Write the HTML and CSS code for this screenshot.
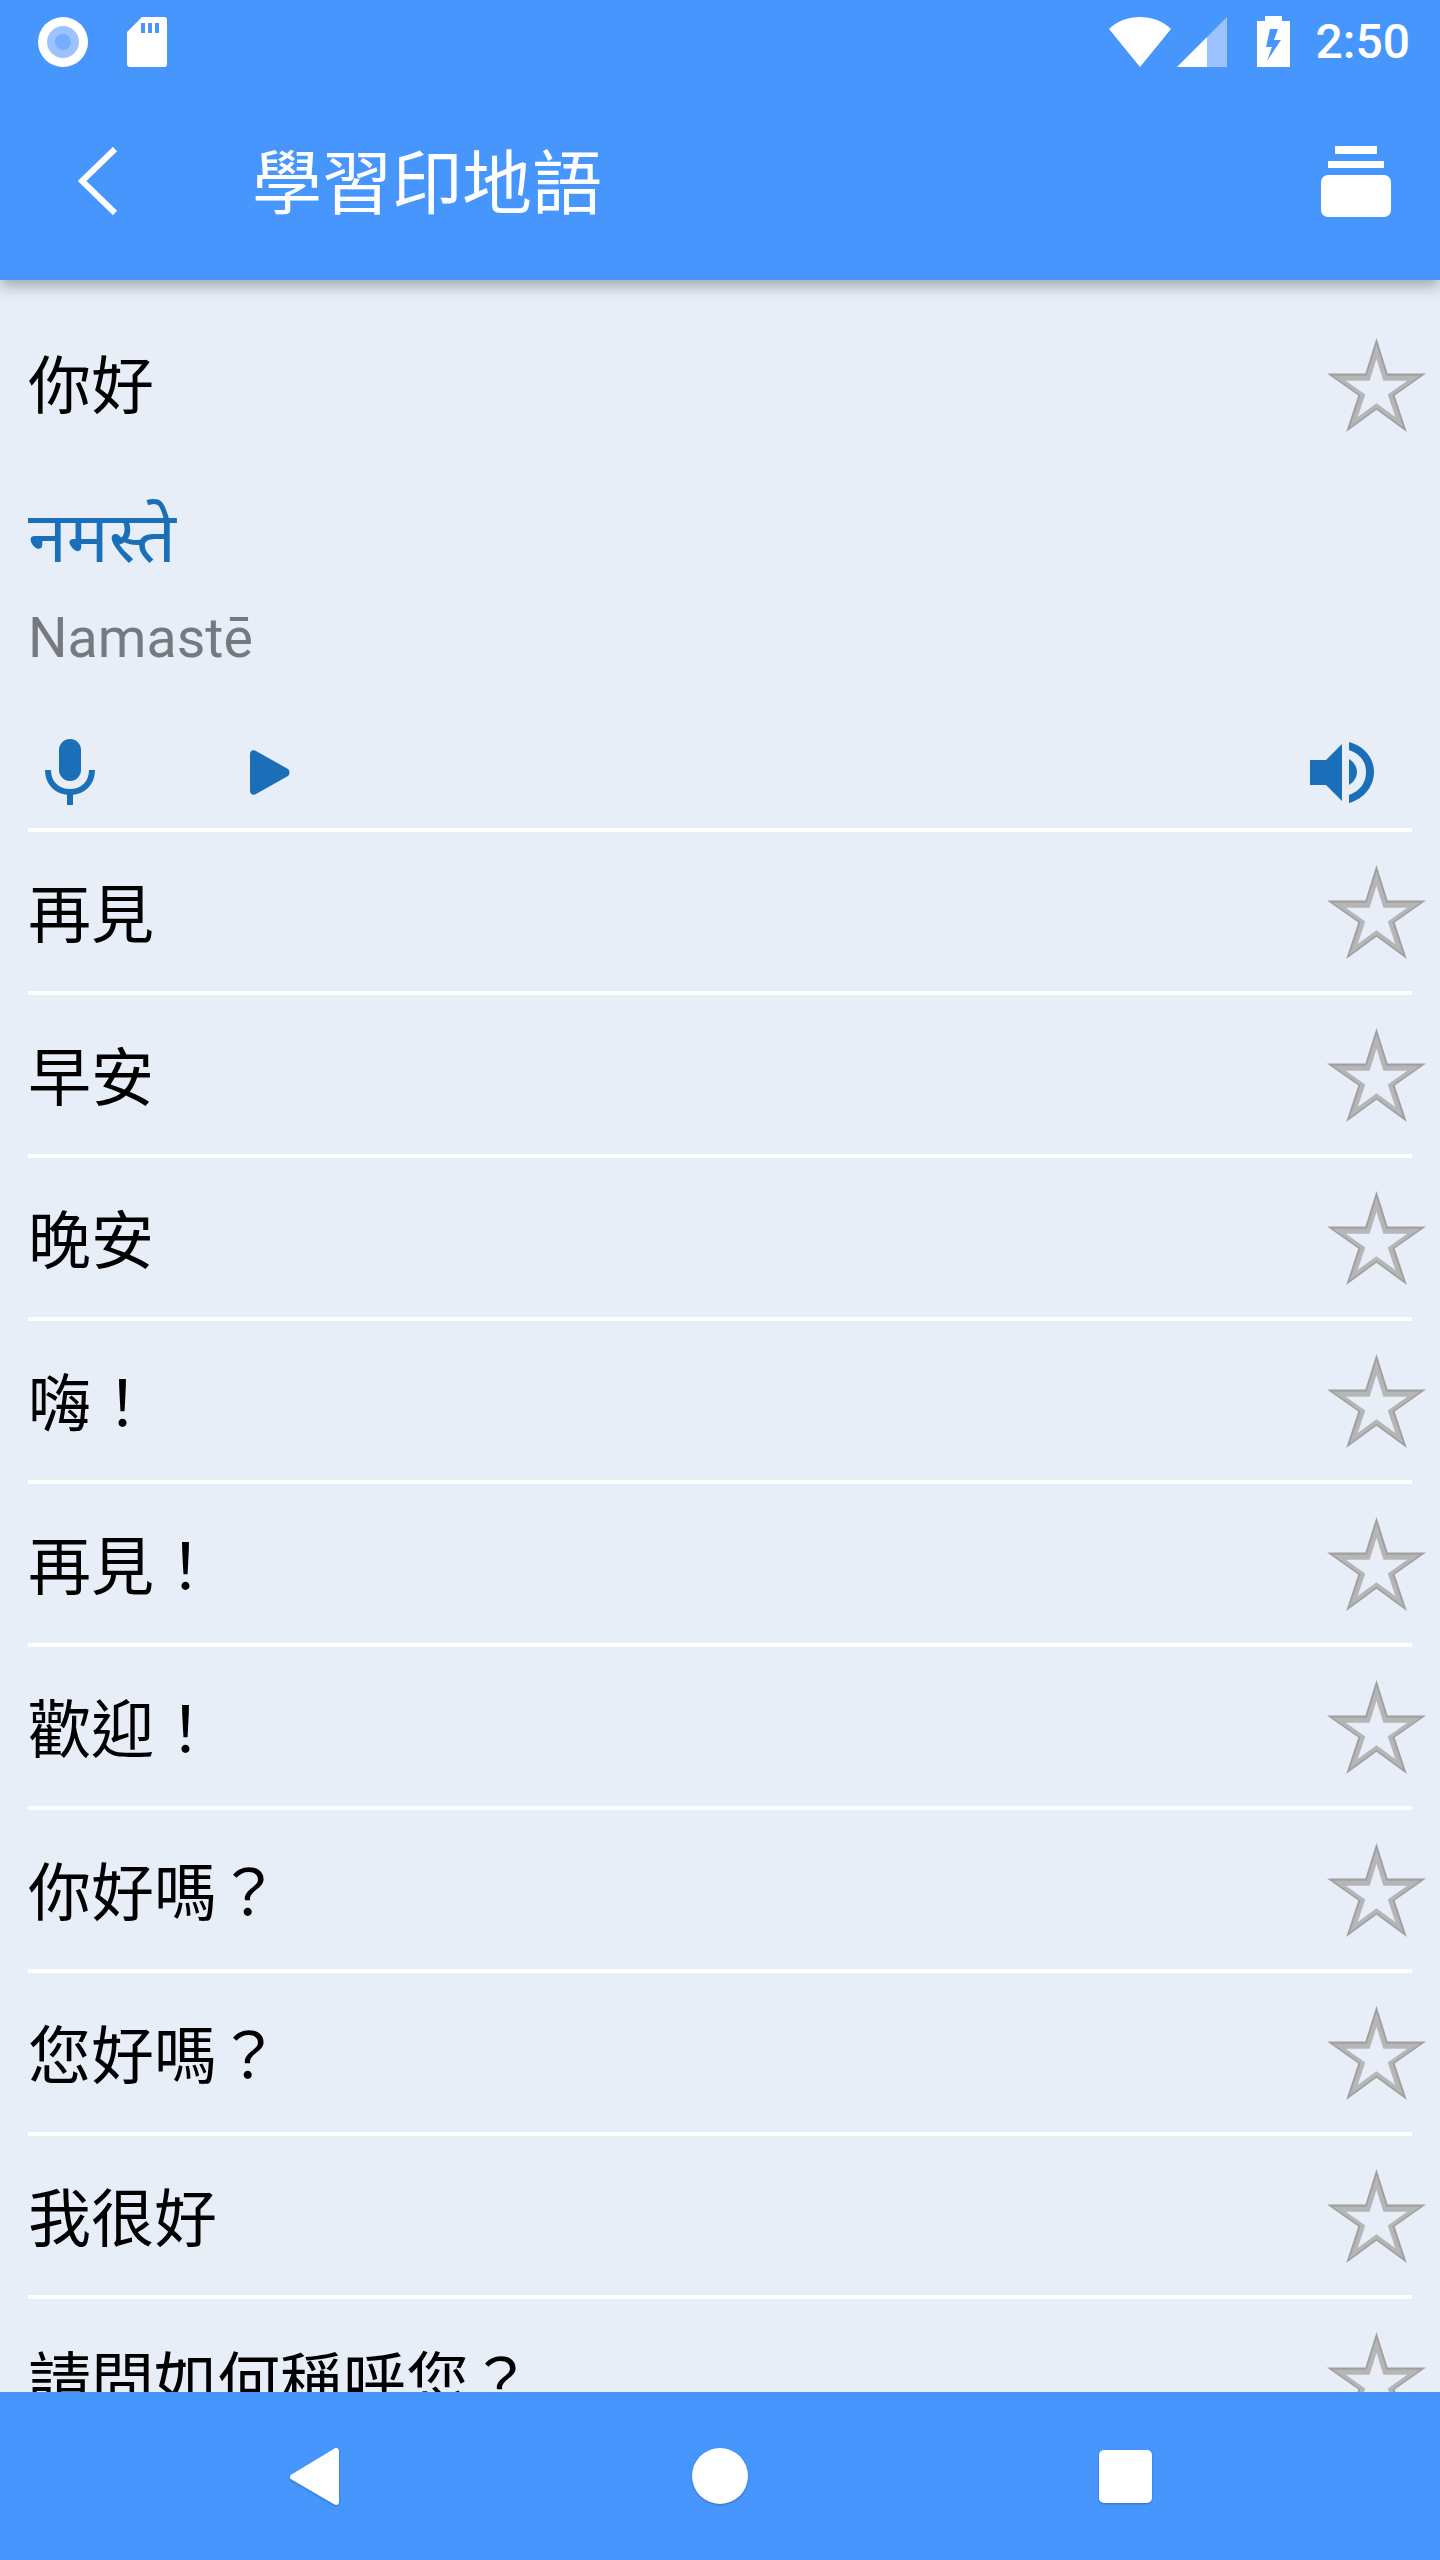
FILE: index.html
```html
<!DOCTYPE html>
<html lang="zh-Hant">
<head>
  <meta charset="UTF-8"/>
  <meta name="viewport" content="width=device-width, initial-scale=1.0"/>
  <title>學習印地語</title>
  <link rel="stylesheet" href="styles.css">
</head>
<body>
  <svg class="defs" width="0" height="0">
    <defs>
      <polygon id="star-shape" points="49,0 60,35 98,35 67,57 79,93 49,71 19,93 31,57 0,35 38,35"/>
      <g id="star">
        <use href="#star-shape" class="star-outer"/>
        <use href="#star-shape" class="star-mid" transform="translate(49 54) scale(.88) translate(-49 -54)"/>
        <use href="#star-shape" class="star-hole" transform="translate(49 54) scale(.62) translate(-49 -54)"/>
      </g>
    </defs>
  </svg>

  <header class="appbar">
    <div class="statusbar">
      <div class="status-left">
        <svg class="ic-rec" viewBox="0 0 50 50"><circle cx="25" cy="25" r="25" fill="#fff"/><circle cx="25" cy="25" r="16" fill="#9cc3ff"/><circle cx="25" cy="25" r="8" fill="#74aefe"/></svg>
        <svg class="ic-sd" viewBox="0 0 40 50"><path fill="#fff" fill-rule="evenodd" d="M15 0H37a3 3 0 0 1 3 3V47a3 3 0 0 1-3 3H3a3 3 0 0 1-3-3V15ZM14 6v10h4V6ZM21 6v10h4V6ZM28 6v10h4V6Z"/></svg>
      </div>
      <div class="status-right">
        <svg class="ic-wifi" viewBox="0 0 62 50"><path fill="#fff" d="M31 50 0 12C8 4 19 0 31 0s23 4 31 12Z"/></svg>
        <svg class="ic-signal" viewBox="0 0 50 50"><path fill="#9cc3ff" d="M50 0V50H30V20Z"/><path fill="#fff" d="M30 20V50H0Z"/></svg>
        <svg class="ic-battery" viewBox="0 0 33 51"><path fill="#fff" fill-rule="evenodd" d="M8 0H25V5H33V51H0V5H8ZM13 13 9 31H15L10 45 24 24H17L21 13Z"/></svg>
        <span class="clock">2:50</span>
      </div>
    </div>
    <div class="toolbar">
      <svg class="ic-back" viewBox="0 0 40 68"><path fill="none" stroke="#fff" stroke-width="6" d="M37 2 4 34 37 66"/></svg>
      <h1 class="title">學習印地語</h1>
      <svg class="ic-stack" viewBox="0 0 70 71"><rect x="14" width="42" height="8" fill="#fff"/><rect x="7" y="15" width="56" height="7" fill="#fff"/><rect y="29" width="70" height="42" rx="7" fill="#fff"/></svg>
    </div>
  </header>

  <main class="phrases">
    <section class="phrase phrase-open">
      <div class="phrase-head">
        <span class="zh">你好</span>
        <svg class="star" viewBox="0 0 98 93"><use href="#star"/></svg>
      </div>
      <div class="hindi">नमस्ते</div>
      <div class="roman">Namastē</div>
      <div class="actions">
        <svg class="ic-mic" viewBox="0 0 50 66"><rect x="14" width="22" height="42" rx="11" fill="#1b6fb8"/><path fill="none" stroke="#1b6fb8" stroke-width="6" d="M3 31C3 44 12 53 25 53S47 44 47 31M25 53V66"/></svg>
        <svg class="ic-play" viewBox="0 0 40 45"><path fill="#1b6fb8" d="M0 4C0 1 3-1 6 1L38 19C40 21 40 24 38 26L6 44C3 46 0 44 0 41Z"/></svg>
        <svg class="ic-speaker" viewBox="0 0 64 61"><path fill="#1b6fb8" d="M0 18H16L32 2V59L16 43H0ZM39 17C44 20 47 25 47 30S44 40 39 43ZM39 0C54 4 64 16 64 30S54 57 39 61V53C50 49 56 41 56 30S50 12 39 8Z"/></svg>
      </div>
    </section>
    <div class="phrase"><span class="zh">再見</span><svg class="star" viewBox="0 0 98 93"><use href="#star"/></svg></div>
    <div class="phrase"><span class="zh">早安</span><svg class="star" viewBox="0 0 98 93"><use href="#star"/></svg></div>
    <div class="phrase"><span class="zh">晚安</span><svg class="star" viewBox="0 0 98 93"><use href="#star"/></svg></div>
    <div class="phrase"><span class="zh">嗨！</span><svg class="star" viewBox="0 0 98 93"><use href="#star"/></svg></div>
    <div class="phrase"><span class="zh">再見！</span><svg class="star" viewBox="0 0 98 93"><use href="#star"/></svg></div>
    <div class="phrase"><span class="zh">歡迎！</span><svg class="star" viewBox="0 0 98 93"><use href="#star"/></svg></div>
    <div class="phrase"><span class="zh">你好嗎？</span><svg class="star" viewBox="0 0 98 93"><use href="#star"/></svg></div>
    <div class="phrase"><span class="zh">您好嗎？</span><svg class="star" viewBox="0 0 98 93"><use href="#star"/></svg></div>
    <div class="phrase"><span class="zh">我很好</span><svg class="star" viewBox="0 0 98 93"><use href="#star"/></svg></div>
    <div class="phrase"><span class="zh">請問如何稱呼您？</span><svg class="star" viewBox="0 0 98 93"><use href="#star"/></svg></div>
  </main>

  <footer class="navbar">
    <svg class="nav-icon" viewBox="0 0 60 60"><path fill="#fff" stroke="#fff" stroke-width="6" stroke-linejoin="round" d="M8 31 51 5V56Z"/></svg>
    <svg class="nav-icon" viewBox="0 0 60 60"><circle cx="30" cy="30" r="28" fill="#fff"/></svg>
    <svg class="nav-icon" viewBox="0 0 60 60"><rect x="4" y="4" width="53" height="53" rx="5" fill="#fff"/></svg>
  </footer>
</body>
</html>
```
FILE: styles.css
```css
* { box-sizing:border-box; }
html, body { margin:0; height:100%; }
body { width:1440px; height:2560px; display:flex; flex-direction:column; overflow:hidden; background:#e7eef8; color:#000; font-family:"Noto Sans CJK TC", "Noto Sans", sans-serif; }
.defs { position:absolute; }

.appbar { height:280px; flex-shrink:0; background:#4696fe; box-shadow:0 6px 14px rgba(0,0,0,.3); position:relative; z-index:2; color:#fff; }
.statusbar { height:84px; padding:17px 30px 0 38px; display:flex; justify-content:space-between; align-items:flex-start; }
.status-left { display:flex; gap:39px; }
.status-right { display:flex; align-items:flex-start; }
.ic-rec { width:50px; height:50px; }
.ic-sd { width:40px; height:50px; }
.ic-wifi { width:62px; height:50px; }
.ic-signal { width:50px; height:50px; margin-left:6px; }
.ic-battery { width:33px; height:51px; margin-left:30px; margin-top:-1px; }
.clock { margin-left:26px; font:500 48px/50px Roboto, sans-serif; }

.toolbar { height:196px; padding:0 49px 0 78px; display:flex; align-items:flex-start; }
.ic-back { width:40px; height:68px; margin-top:63px; }
.title { margin:45px 0 0 134px; font-size:70px; font-weight:400; line-height:100px; flex:1; }
.ic-stack { width:70px; height:71px; margin-top:62px; }

.phrases { flex:1; min-height:0; overflow:hidden; }
.phrase { height:163px; margin:0 28px; border-bottom:4px solid #fff; display:flex; justify-content:space-between; align-items:center; }
.phrase .star { margin-right:-14px; }
.phrase-open { height:552px; margin:0 28px; display:block; }
.phrase-head { height:210px; display:flex; justify-content:space-between; align-items:center; }
.zh { font-size:63px; line-height:80px; margin-bottom:3px; }
.phrase-head .zh { margin-bottom:8px; }
.star { width:99px; height:94px; flex-shrink:0; }
.star-outer { fill:#a0a0a0; }
.star-mid { fill:#b6b6b6; }
.star-hole { fill:#e7eef8; }

.hindi { margin-top:15px; color:#1b6fb8; font-family:"Noto Sans Devanagari", "Lohit Devanagari", "Noto Sans", sans-serif; font-size:70px; line-height:80px; }
.roman { margin-top:22px; color:#767a80; font:400 55.5px/64px Roboto, sans-serif; }
.actions { height:112px; margin-top:45px; padding:0 38px 0 17px; display:flex; align-items:center; }
.ic-mic { width:50px; height:66px; }
.ic-play { width:40px; height:45px; margin-left:155px; }
.ic-speaker { width:64px; height:61px; margin-left:auto; }

.navbar { height:168px; flex-shrink:0; background:#4696fe; padding:0 285px; display:flex; justify-content:space-between; align-items:center; position:relative; z-index:2; }
.nav-icon { width:60px; height:60px; filter:drop-shadow(0 1px 1px rgba(0,0,0,.25)); }
```
